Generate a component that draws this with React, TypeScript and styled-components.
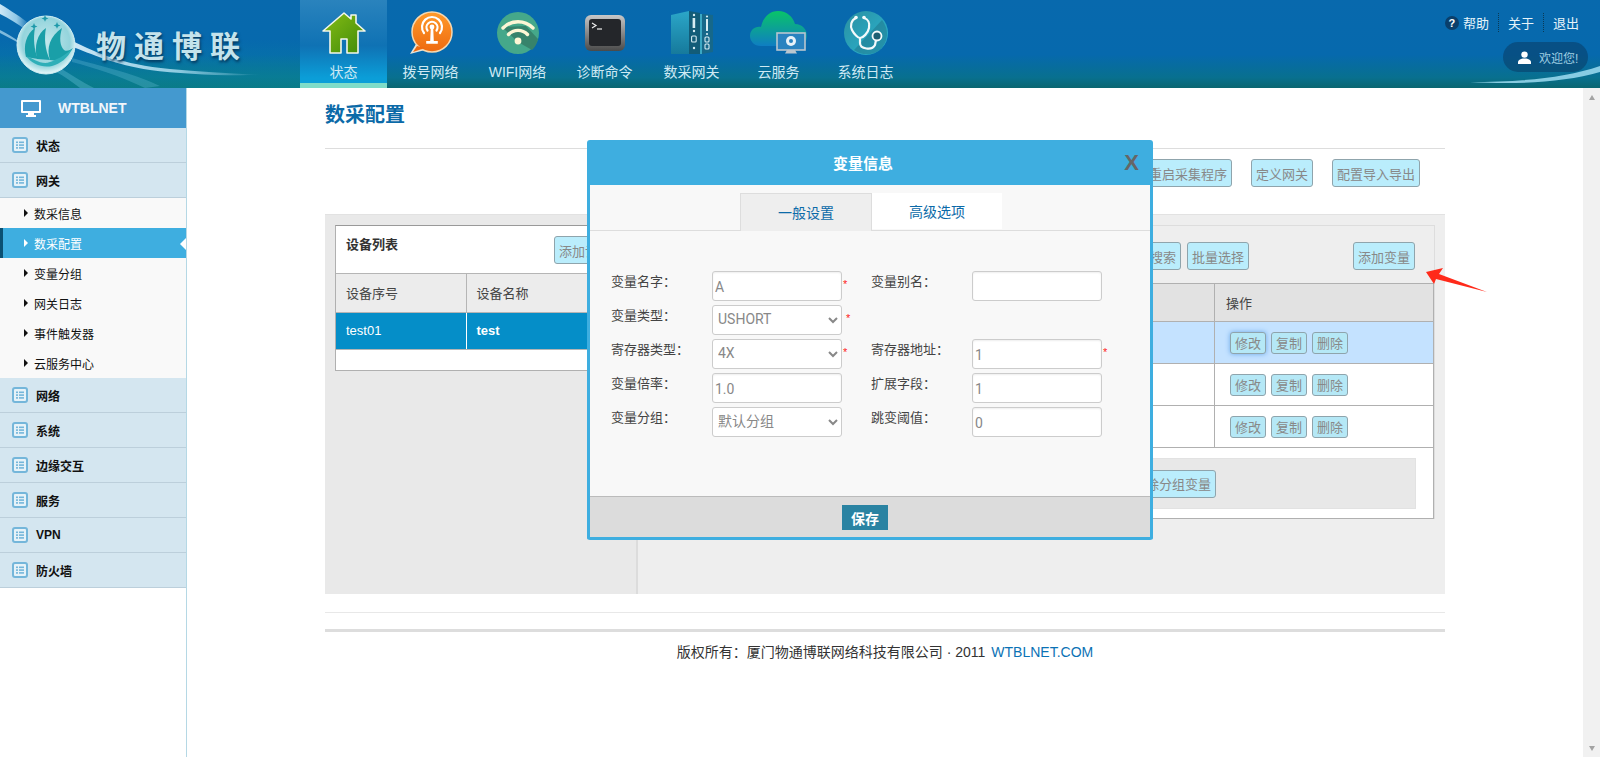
import React from "react";
import styled, { createGlobalStyle } from "styled-components";

const CJK = `"Liberation Sans", "Noto Sans CJK SC", sans-serif`;

const GlobalStyle = createGlobalStyle`
  html, body {
    margin: 0;
    padding: 0;
    height: 100%;
    overflow: hidden;
    background: #fff;
    font-family: ${CJK};
    font-size: 13px;
    color: #333;
  }
  * { box-sizing: border-box; }
`;

const Page = styled.div`
  position: relative;
  width: 1600px;
  height: 757px;
  display: flex;
  flex-direction: column;
  overflow: hidden;
`;

/* ---------- header ---------- */

const Header = styled.header`
  position: relative;
  flex: 0 0 88px;
  display: flex;
  background: linear-gradient(#0869ad 0%, #0669ad 62%, #08708f 88%, #0a6670 100%);
`;

const Banner = styled.div`
  position: relative;
  flex: 0 0 300px;
  display: flex;
  align-items: center;
  padding-left: 96px;
  overflow: hidden;
`;

const BannerArt = styled.svg`
  position: absolute;
  left: 0;
  top: 0;
`;

const BrandName = styled.span`
  position: relative;
  font-family: "Noto Sans CJK SC", sans-serif;
  font-size: 30px;
  font-weight: 700;
  letter-spacing: 8px;
  line-height: 34px;
  color: #c4e3ec;
  text-shadow: 1px 2px 3px #04375c;
  white-space: nowrap;
`;

const Nav = styled.nav`
  display: flex;
`;

const NavItem = styled.a<{ $active?: boolean }>`
  width: 87px;
  height: 88px;
  display: flex;
  flex-direction: column;
  align-items: center;
  padding-top: 10px;
  color: #cfeaf4;
  font-size: 14px;
  background: ${(p) =>
    p.$active ? "linear-gradient(#2a83bd, #0f72b4 55%, #0b9ed8 94%)" : "none"};
  border-bottom: 5px solid ${(p) => (p.$active ? "#7fdcc8" : "transparent")};
`;

const NavLabel = styled.span`
  margin-top: 6px;
  line-height: 20px;
  white-space: nowrap;
`;

const HeaderRight = styled.div`
  position: relative;
  margin-left: auto;
  display: flex;
  flex-direction: column;
  align-items: flex-end;
  padding: 14px 12px 0 0;
  width: 280px;
  overflow: hidden;
`;

const TopLinks = styled.div`
  position: relative;
  display: flex;
  align-items: center;
  height: 17px;
  color: #e6f4fa;
  font-size: 13px;
  padding-right: 9px;
`;

const HelpDot = styled.span`
  width: 14px;
  height: 14px;
  border-radius: 50%;
  background: #0a3f6b;
  color: #fff;
  font-size: 11px;
  font-weight: 700;
  line-height: 14px;
  text-align: center;
  margin-right: 4px;
`;

const TopLink = styled.a<{ $sep?: boolean }>`
  padding-left: ${(p) => (p.$sep ? "9px" : "0")};
  margin-left: ${(p) => (p.$sep ? "9px" : "0")};
  border-left: ${(p) => (p.$sep ? "1px dotted #0a3a55" : "none")};
`;

const Welcome = styled.div`
  position: relative;
  margin-top: 11px;
  width: 85px;
  height: 30px;
  border-radius: 15px;
  background: rgba(10, 60, 100, 0.55);
  display: flex;
  align-items: center;
  gap: 8px;
  padding-left: 15px;
  color: #9fcfe2;
  font-size: 12px;
`;

const Flare = styled.svg`
  position: absolute;
  right: 0;
  bottom: 0;
`;

/* ---------- body ---------- */

const Body = styled.div`
  flex: 1;
  display: flex;
  min-height: 0;
`;

const Sidebar = styled.aside`
  flex: 0 0 187px;
  border-right: 1px solid #b5d8e5;
`;

const SideTitle = styled.div`
  height: 40px;
  display: flex;
  align-items: center;
  gap: 17px;
  padding-left: 21px;
  background: #4499cf;
  color: #f2f6fb;
  font-size: 14px;
  font-weight: 700;
`;

const MenuRow = styled.div`
  height: 35px;
  display: flex;
  align-items: center;
  gap: 8px;
  padding-left: 12px;
  background: #d4e6f0;
  border-bottom: 1px solid #bccfdb;
  color: #111;
  font-size: 12px;
  font-weight: 700;
`;

const SubList = styled.div`
  background: #f9f9f9;
`;

const SubRow = styled.div<{ $active?: boolean }>`
  position: relative;
  height: 30px;
  display: flex;
  align-items: center;
  gap: 6px;
  padding-left: ${(p) => (p.$active ? "21px" : "24px")};
  color: ${(p) => (p.$active ? "#fff" : "#111")};
  font-size: 12px;
  background: ${(p) => (p.$active ? "#3eaee0" : "none")};
  border-left: ${(p) => (p.$active ? "3px solid #0a5072" : "none")};
`;

const Caret = styled.i<{ $active?: boolean }>`
  width: 0;
  height: 0;
  border-style: solid;
  border-width: 4px 0 4px 4px;
  border-color: transparent transparent transparent
    ${(p) => (p.$active ? "#fff" : "#111")};
`;

const Notch = styled.i`
  position: absolute;
  right: 0;
  top: 10px;
  width: 0;
  height: 0;
  border-style: solid;
  border-width: 6px 6px 6px 0;
  border-color: transparent #fff transparent transparent;
`;

const Main = styled.main`
  flex: 1;
  padding: 0 138px;
`;

const PageTitle = styled.h2`
  margin: 0;
  height: 61px;
  padding-top: 12px;
  border-bottom: 1px solid #ddd;
  color: #0b6aa8;
  font-size: 20px;
  font-weight: 700;
  line-height: 30px;
`;

const Toolbar = styled.div`
  display: flex;
  justify-content: flex-end;
  gap: 19px;
  height: 65px;
  padding: 10px 25px 0 0;
`;

const ActionButton = styled.button`
  height: 28px;
  padding: 0 4px;
  border: 1px solid #8fa4ac;
  border-radius: 3px;
  background: #baedfc;
  color: #888;
  font-family: ${CJK};
  font-size: 13px;
  white-space: nowrap;
`;

const Panels = styled.section`
  height: 380px;
  display: flex;
  border-top: 1px solid #e2e2e2;
`;

const LeftPanel = styled.div`
  flex: 0 0 313px;
  padding: 10px;
  background: #e9e9e9;
  border-right: 2px solid #dcdcdc;
`;

const RightPanel = styled.div`
  flex: 1;
  padding: 10px 10px 0;
  background: #eee;
`;

const DeviceBox = styled.div`
  background: #fff;
  border: 1px solid #b0b0b0;
  border-top-color: #999;
`;

const DeviceHead = styled.div`
  height: 48px;
  display: flex;
  justify-content: space-between;
  padding: 10px 9px 0 10px;
  border-bottom: 1px solid #b5b5b5;
  font-weight: 700;
  font-size: 13px;
  line-height: 18px;
  color: #333;
`;

const DataTable = styled.table`
  width: 100%;
  border-collapse: collapse;
  table-layout: fixed;
`;

const HeadCell = styled.th<{ $w?: number }>`
  height: 38px;
  padding: 0 10px;
  width: ${(p) => (p.$w ? `${p.$w}px` : "auto")};
  background: #ececec;
  border-right: 1px solid #b5b5b5;
  border-bottom: 1px solid #b5b5b5;
  font-weight: 400;
  font-size: 13px;
  text-align: left;
  color: #444;
`;

const DeviceCell = styled.td<{ $bold?: boolean }>`
  height: 37px;
  padding: 0 10px;
  background: #058ec8;
  border-right: 1px solid #fff;
  border-bottom: 1px solid #b5b5b5;
  color: #fff;
  font-size: 13px;
  font-weight: ${(p) => (p.$bold ? 700 : 400)};
`;

const DeviceSpacer = styled.div`
  height: 20px;
`;

const VarBox = styled.div`
  border-top: 1px solid #ddd;
  border-right: 1px solid #ddd;
`;

const VarTools = styled.div`
  height: 57px;
  display: flex;
  gap: 6px;
  padding: 16px 19px 0 0;
  justify-content: flex-end;
`;

const AddVarSlot = styled.div`
  margin-left: 98px;
`;

const VarTable = styled.div`
  background: #fff;
  border: 1px solid #b0b0b0;
`;

const VarGrid = styled.div`
  display: grid;
  grid-template-columns: 1fr 219px;
`;

const VarHeadCell = styled.div<{ $first?: boolean }>`
  height: 38px;
  display: flex;
  align-items: center;
  padding-left: 11px;
  background: #e2e2e2;
  border-left: ${(p) => (p.$first ? "none" : "1px solid #b0b0b0")};
  border-bottom: 1px solid #b0b0b0;
  font-size: 13px;
  color: #444;
`;

const VarCell = styled.div<{ $first?: boolean; $selected?: boolean }>`
  height: 42px;
  display: flex;
  align-items: center;
  gap: 5px;
  padding-left: 15px;
  background: ${(p) => (p.$selected ? "#c4e2ff" : "#fff")};
  border-left: ${(p) => (p.$first ? "none" : "1px solid #b0b0b0")};
  border-bottom: 1px solid #b0b0b0;
`;

const RowButton = styled.button<{ $glow?: boolean }>`
  width: 36px;
  height: 22px;
  padding: 0;
  border: 1px solid #8fa4ac;
  border-radius: 3px;
  background: #b5e8f6;
  color: #888;
  font-family: ${CJK};
  font-size: 13px;
  box-shadow: ${(p) => (p.$glow ? "0 0 5px #6aa8e8" : "none")};
`;

const GroupFooter = styled.div`
  padding: 10px 17px 9px 10px;
`;

const GroupBar = styled.div`
  height: 51px;
  display: flex;
  justify-content: flex-end;
  align-items: center;
  padding-right: 199px;
  background: #e8e8e8;
  border: 1px solid #e2e2e2;
`;

const FooterRule = styled.div`
  margin-top: 18px;
  height: 1px;
  background: #e8e8e8;
`;

const CopyRight = styled.footer`
  margin-top: 16px;
  border-top: 3px solid #ddd;
  padding-top: 10px;
  text-align: center;
  font-size: 14px;
  line-height: 20px;
  color: #333;
`;

const CopyLink = styled.a`
  margin-left: 6px;
  color: #0b72b5;
`;

const ScrollTrack = styled.div`
  flex: 0 0 17px;
  display: flex;
  flex-direction: column;
  justify-content: space-between;
  align-items: center;
  padding: 7px 0 6px;
  background: #f1f1f1;
`;

const ScrollArrow = styled.i<{ $down?: boolean }>`
  width: 0;
  height: 0;
  border-style: solid;
  border-width: ${(p) => (p.$down ? "5px 3.5px 0" : "0 3.5px 5px")};
  border-color: ${(p) =>
    p.$down
      ? "#a3a3a3 transparent transparent"
      : "transparent transparent #a3a3a3"};
`;

/* ---------- modal ---------- */

const Modal = styled.div`
  position: absolute;
  left: 587px;
  top: 140px;
  width: 566px;
  height: 400px;
  display: flex;
  flex-direction: column;
  background: #f8f8f8;
  border: 3px solid #3eaee0;
  border-top: none;
  border-radius: 3px;
`;

const ModalHead = styled.div`
  position: relative;
  flex: 0 0 45px;
  display: flex;
  justify-content: center;
  align-items: center;
  padding-right: 14px;
  background: #3eaee0;
  color: #fff;
  font-size: 15px;
  font-weight: 700;
`;

const CloseMark = styled.span`
  position: absolute;
  right: 11px;
  top: 12px;
  font-size: 22px;
  line-height: 22px;
  font-weight: 700;
  color: #666;
`;

const TabBar = styled.div`
  display: flex;
  height: 46px;
  padding: 8px 0 0 150px;
  border-bottom: 1px solid #ddd;
`;

const Tab = styled.div<{ $current?: boolean }>`
  width: ${(p) => (p.$current ? "132px" : "130px")};
  height: ${(p) => (p.$current ? "38px" : "36px")};
  display: flex;
  justify-content: center;
  align-items: center;
  padding-bottom: 1px;
  color: #0b6aa8;
  font-size: 14px;
  background: ${(p) => (p.$current ? "#eee" : "#fff")};
  border: ${(p) => (p.$current ? "1px solid #ddd" : "none")};
  border-bottom: none;
`;

const FormGrid = styled.div`
  flex: 1;
  display: grid;
  grid-template-columns: 100px 130px 30px 100px 130px 1fr;
  grid-auto-rows: 30px;
  row-gap: 4px;
  padding: 40px 0 0 22px;
`;

const FieldLabel = styled.label`
  padding-top: 2px;
  margin-left: -1px;
  font-size: 13px;
  line-height: 18px;
  color: #444;
`;

const TextField = styled.input`
  width: 130px;
  height: 30px;
  padding: 1px 2px 0;
  border: 1px solid #ccc;
  border-radius: 3px;
  background: #fff;
  box-shadow: inset 0 1px 2px #eee;
  color: #888;
  font-family: Roboto, "Noto Sans CJK SC", sans-serif;
  font-size: 14px;
`;

const SelectField = styled.select`
  width: 130px;
  height: 30px;
  padding: 0 1px 2px;
  border: 1px solid #ccc;
  border-radius: 3px;
  background: #fff;
  color: #888;
  font-family: Roboto, "Noto Sans CJK SC", sans-serif;
  font-size: 14px;
`;

const Required = styled.span<{ $wide?: boolean }>`
  padding: 6px 0 0 ${(p) => (p.$wide ? "4px" : "1px")};
  color: #f22;
  font-size: 11px;
  line-height: 14px;
`;

const ModalFoot = styled.div`
  flex: 0 0 41px;
  display: flex;
  justify-content: center;
  align-items: flex-start;
  padding: 8px 10px 0 0;
  background: #dcdcdc;
  border-top: 1px solid #bbb;
`;

const SaveButton = styled.button`
  width: 46px;
  height: 25px;
  padding: 0;
  border: none;
  background: #2a83a2;
  color: #fff;
  font-family: ${CJK};
  font-size: 14px;
  font-weight: 700;
`;

const PointerArrow = styled.svg`
  position: absolute;
  left: 1420px;
  top: 262px;
`;

/* ---------- drawings ---------- */

const LogoArt = () => (
  <BannerArt width="300" height="88" viewBox="0 0 300 88">
    <defs>
      <radialGradient id="ball" cx="50%" cy="45%" r="55%">
        <stop offset="0" stopColor="#c2e8ec" />
        <stop offset="0.75" stopColor="#94d4dc" />
        <stop offset="1" stopColor="#e8f8fa" />
      </radialGradient>
      <linearGradient id="sweep" x1="0" y1="0" x2="1" y2="0">
        <stop offset="0" stopColor="#e4f6fe" stopOpacity="0.9" />
        <stop offset="0.55" stopColor="#bfe8fa" stopOpacity="0.75" />
        <stop offset="1" stopColor="#bfe8fa" stopOpacity="0" />
      </linearGradient>
      <linearGradient id="haze" x1="0" y1="0" x2="0" y2="1">
        <stop offset="0" stopColor="#0a8c9c" stopOpacity="0" />
        <stop offset="1" stopColor="#0a8c9c" stopOpacity="0.55" />
      </linearGradient>
    </defs>
    <rect y="40" width="300" height="48" fill="url(#haze)" />
    <path d="M0 4 C10 10 22 18 30 24 L26 30 C18 24 8 18 0 14Z" fill="url(#sweep)" />
    <path d="M0 30 C8 34 14 38 20 42 L20 44 C14 40 6 36 0 33Z" fill="#cfeefc" opacity="0.6" />
    <path d="M70 40 C100 54 120 64 170 69 C200 72 230 73 262 75 C220 76 180 74 150 70 C115 65 92 54 70 46Z" fill="url(#sweep)" />
    <path d="M72 58 C100 66 130 72 160 86 L145 88 C120 76 95 68 72 62Z" fill="#7fd0e8" opacity="0.25" />
    <path d="M60 68 C70 74 82 82 94 88 L80 88 C72 82 64 76 56 72Z" fill="#7fd0e8" opacity="0.3" />
    <circle cx="46" cy="45" r="29" fill="url(#ball)" stroke="#cfeef2" strokeWidth="1" />
    <path d="M26 57 C23 46 26 34 35 28 C33 38 34 50 38 59Z" fill="#1a9fa8" />
    <path d="M37 59 C34 46 37 34 46 28 C44 38 45 50 50 60Z" fill="#1a9fa8" />
    <path d="M50 60 C46 48 50 36 62 28 C59 38 60 46 64 50 C67 52 70 50 73 48 C68 56 60 62 50 60Z" fill="#1a9fa8" />
    <path d="M26 56 C33 58 42 66 50 62 C56 60 64 56 72 49 C68 58 60 64 52 66 C42 68 32 64 26 56Z" fill="#2fafb8" />
    <g fill="#1f9aaa">
      <path d="M34 23l1 2.4 2.4 1-2.4 1-1 2.4-1-2.4-2.4-1 2.4-1z" />
      <path d="M45 15l1 2.4 2.4 1-2.4 1-1 2.4-1-2.4-2.4-1 2.4-1z" />
      <path d="M57 22l1 2.4 2.4 1-2.4 1-1 2.4-1-2.4-2.4-1 2.4-1z" />
    </g>
  </BannerArt>
);

const HomeIcon = () => (
  <svg width="60" height="46" viewBox="0 0 60 46">
    <defs>
      <linearGradient id="homeFill" x1="0" y1="0" x2="1" y2="1">
        <stop offset="0" stopColor="#86bd14" />
        <stop offset="1" stopColor="#3f8a0a" />
      </linearGradient>
    </defs>
    <path
      d="M30 3 L37 9 V5 H42 V13 L51 21 H44 V43 H33 V29 H27 V43 H16 V21 H9 Z"
      fill="url(#homeFill)"
      stroke="#f3f6ea"
      strokeWidth="1.6"
      strokeLinejoin="round"
    />
  </svg>
);

const DialIcon = () => (
  <svg width="60" height="46" viewBox="0 0 60 46">
    <defs>
      <linearGradient id="dialFill" x1="0" y1="0" x2="0" y2="1">
        <stop offset="0" stopColor="#ff9a2a" />
        <stop offset="1" stopColor="#ee6a10" />
      </linearGradient>
    </defs>
    <path d="M15 34 L9 44 L24 40Z" fill="#e9e3d6" />
    <circle cx="31" cy="22" r="20" fill="url(#dialFill)" stroke="#f6d8b0" strokeWidth="1.5" />
    <path d="M16 36 L12 42 L24 38Z" fill="#ee6a10" />
    <g fill="none" stroke="#fff" strokeWidth="2.2" strokeLinecap="round">
      <path d="M23 23a10 10 0 1 1 16 0" />
      <path d="M26.5 20.5a5.5 5.5 0 1 1 9 0" />
    </g>
    <circle cx="31" cy="17" r="2.4" fill="#fff" />
    <path d="M29.8 18 h2.4 l.6 13 h4 v2.8 h-11.6 v-2.8 h4z" fill="#fff" />
  </svg>
);

const WifiIcon = () => (
  <svg width="60" height="46" viewBox="0 0 60 46">
    <circle cx="30" cy="23" r="21" fill="#45a88a" />
    <path d="M14 17 L30 32 L44 40 A21 21 0 0 0 50 29 L38 16Z" fill="#37836b" />
    <g fill="none" stroke="#fdf6d5" strokeWidth="3.4" strokeLinecap="round">
      <path d="M15 18a21 21 0 0 1 30 0" />
      <path d="M20.5 24.5a13 13 0 0 1 19 0" />
    </g>
    <circle cx="30" cy="31" r="3.4" fill="#fdf6d5" />
  </svg>
);

const TerminalIcon = () => (
  <svg width="60" height="46" viewBox="0 0 60 46">
    <defs>
      <linearGradient id="termRim" x1="0" y1="0" x2="0" y2="1">
        <stop offset="0" stopColor="#c8c8c8" />
        <stop offset="1" stopColor="#4a4a4a" />
      </linearGradient>
    </defs>
    <rect x="10" y="5" width="40" height="36" rx="6" fill="url(#termRim)" />
    <rect x="14" y="9" width="32" height="27" rx="3" fill="#24262a" />
    <path d="M17 13l4 2.5-4 2.5" fill="none" stroke="#eee" strokeWidth="1.2" />
    <path d="M22 19h5" stroke="#eee" strokeWidth="1.2" />
  </svg>
);

const GatewayIcon = () => (
  <svg width="60" height="46" viewBox="0 0 60 46">
    <defs>
      <linearGradient id="gwSide" x1="0" y1="0" x2="0" y2="1">
        <stop offset="0" stopColor="#2ba6c8" />
        <stop offset="1" stopColor="#167a9c" />
      </linearGradient>
    </defs>
    <path d="M9 5 L27 1 V44 H9Z" fill="url(#gwSide)" />
    <path d="M27 1 L38 3 V44 H27Z" fill="#125c78" />
    <path d="M38 4 H40 V44 H38Z" fill="#3aa8c4" />
    <path d="M40 4 L51 5 V42 L40 44Z" fill="#16688a" />
    <g fill="#d6ecf2">
      <circle cx="32" cy="5" r="1.2" />
      <rect x="30.6" y="8" width="2.6" height="10" />
      <circle cx="32" cy="21" r="1.2" />
      <circle cx="32" cy="38" r="1.2" />
      <circle cx="45" cy="6.5" r="1.1" />
      <rect x="44" y="9" width="2" height="12" />
      <circle cx="45" cy="24" r="1.1" />
    </g>
    <g fill="none" stroke="#d6ecf2" strokeWidth="1.1">
      <rect x="29.6" y="26" width="4.6" height="6" rx="1" />
      <rect x="43" y="27" width="4" height="5" rx="1" />
      <rect x="43" y="34" width="4" height="5" rx="1" />
    </g>
  </svg>
);

const CloudIcon = () => (
  <svg width="60" height="46" viewBox="0 0 60 46">
    <defs>
      <linearGradient id="cloudFill" x1="0" y1="0" x2="0" y2="1">
        <stop offset="0" stopColor="#09c468" />
        <stop offset="1" stopColor="#0f7ec2" />
      </linearGradient>
    </defs>
    <path
      d="M12 36 C5 36 1 31 1 26 C1 20 6 16 12 17 C14 7 21 1 29 1 C38 1 44 7 46 14 C53 14 58 19 58 26 C58 31 55 36 48 36Z"
      fill="url(#cloudFill)"
    />
    <rect x="28" y="23" width="28" height="17" fill="#2a83c0" stroke="#b9c6cf" strokeWidth="1.6" />
    <path d="M38 40h8l2 3.5H36z" fill="#b9c6cf" />
    <circle cx="42" cy="31" r="5" fill="#e8f2f8" />
    <circle cx="42" cy="31" r="2" fill="#2a83c0" />
  </svg>
);

const StethoIcon = () => (
  <svg width="60" height="46" viewBox="0 0 60 46">
    <defs>
      <linearGradient id="stethoFill" x1="0" y1="0" x2="1" y2="1">
        <stop offset="0" stopColor="#2a8fa0" />
        <stop offset="1" stopColor="#2ab6d4" />
      </linearGradient>
    </defs>
    <circle cx="30" cy="23" r="22" fill="url(#stethoFill)" />
    <path d="M18 40 L46 10 A22 22 0 0 1 44 40 A22 22 0 0 1 18 40Z" fill="#1d6c80" opacity="0.45" />
    <g fill="none" stroke="#f4fafb" strokeWidth="2.2" strokeLinecap="round">
      <path d="M20 8 C15 10 14 16 16 20 C18 24 22 28 24 28 C27 28 32 23 33 18 C34 13 32 9 28 8" />
      <path d="M24 28 V33 C24 39 36 41 39 35 L40 30" />
    </g>
    <circle cx="20" cy="7.5" r="1.8" fill="#f4fafb" />
    <circle cx="28" cy="7.5" r="1.8" fill="#f4fafb" />
    <circle cx="41" cy="26" r="4.5" fill="#1d5f72" stroke="#f4fafb" strokeWidth="1.8" />
  </svg>
);

const MonitorIcon = () => (
  <svg width="20" height="17" viewBox="0 0 20 17">
    <path d="M1 0h18a1 1 0 0 1 1 1v11a1 1 0 0 1-1 1H1a1 1 0 0 1-1-1V1a1 1 0 0 1 1-1zm1 2v9h16V2z" fill="#fff" fillRule="evenodd" />
    <path d="M7 13h6v2h2v2H5v-2h2z" fill="#fff" />
  </svg>
);

const ListIcon = () => (
  <svg width="16" height="16" viewBox="0 0 16 16">
    <rect x="1" y="1" width="14" height="14" rx="2" fill="#e6f2f8" stroke="#74b6da" strokeWidth="2" />
    <g fill="#74b6da">
      <rect x="4" y="4.5" width="2" height="1.6" />
      <rect x="7" y="4.5" width="5" height="1.6" />
      <rect x="4" y="7.3" width="2" height="1.6" />
      <rect x="7" y="7.3" width="5" height="1.6" />
      <rect x="4" y="10.1" width="2" height="1.6" />
      <rect x="7" y="10.1" width="5" height="1.6" />
    </g>
  </svg>
);

const UserIcon = () => (
  <svg width="13" height="13" viewBox="0 0 13 13">
    <circle cx="6.5" cy="3.6" r="3.2" fill="#fff" />
    <path d="M0 13v-2.2C0 9 2.5 8 4.6 7.4h3.8C10.5 8 13 9 13 10.8V13z" fill="#fff" />
  </svg>
);

const navItems = [
  { label: "状态", icon: <HomeIcon />, active: true },
  { label: "拨号网络", icon: <DialIcon /> },
  { label: "WIFI网络", icon: <WifiIcon /> },
  { label: "诊断命令", icon: <TerminalIcon /> },
  { label: "数采网关", icon: <GatewayIcon /> },
  { label: "云服务", icon: <CloudIcon /> },
  { label: "系统日志", icon: <StethoIcon /> },
];

const subItems = ["数采信息", "数采配置", "变量分组", "网关日志", "事件触发器", "云服务中心"];
const lowerMenu = ["网络", "系统", "边缘交互", "服务", "VPN", "防火墙"];

const App: React.FC = () => {
  return (
    <Page>
      <GlobalStyle />
      <Header>
        <Banner>
          <LogoArt />
          <BrandName>物通博联</BrandName>
        </Banner>
        <Nav>
          {navItems.map((item) => (
            <NavItem key={item.label} $active={item.active}>
              {item.icon}
              <NavLabel>{item.label}</NavLabel>
            </NavItem>
          ))}
        </Nav>
        <HeaderRight>
          <Flare width="130" height="30" viewBox="0 0 130 30">
            <path d="M0 24 C50 24 95 20 130 8 V14 C95 24 50 27 0 24Z" fill="#a8e4f8" opacity="0.8" />
          </Flare>
          <TopLinks>
            <HelpDot>?</HelpDot>
            <TopLink>帮助</TopLink>
            <TopLink $sep>关于</TopLink>
            <TopLink $sep>退出</TopLink>
          </TopLinks>
          <Welcome>
            <UserIcon />
            欢迎您!
          </Welcome>
        </HeaderRight>
      </Header>

      <Body>
        <Sidebar>
          <SideTitle>
            <MonitorIcon />
            WTBLNET
          </SideTitle>
          <MenuRow>
            <ListIcon />
            状态
          </MenuRow>
          <MenuRow>
            <ListIcon />
            网关
          </MenuRow>
          <SubList>
            {subItems.map((name) => {
              const active = name === "数采配置";
              return (
                <SubRow key={name} $active={active}>
                  <Caret $active={active} />
                  {name}
                  {active && <Notch />}
                </SubRow>
              );
            })}
          </SubList>
          {lowerMenu.map((name) => (
            <MenuRow key={name}>
              <ListIcon />
              {name}
            </MenuRow>
          ))}
        </Sidebar>

        <Main>
          <PageTitle>数采配置</PageTitle>
          <Toolbar>
            <ActionButton>重启采集程序</ActionButton>
            <ActionButton>定义网关</ActionButton>
            <ActionButton>配置导入导出</ActionButton>
          </Toolbar>
          <Panels>
            <LeftPanel>
              <DeviceBox>
                <DeviceHead>
                  设备列表
                  <ActionButton>添加设备</ActionButton>
                </DeviceHead>
                <DataTable>
                  <thead>
                    <tr>
                      <HeadCell $w={130}>设备序号</HeadCell>
                      <HeadCell>设备名称</HeadCell>
                    </tr>
                  </thead>
                  <tbody>
                    <tr>
                      <DeviceCell>test01</DeviceCell>
                      <DeviceCell $bold>test</DeviceCell>
                    </tr>
                  </tbody>
                </DataTable>
                <DeviceSpacer />
              </DeviceBox>
            </LeftPanel>
            <RightPanel>
              <VarBox>
                <VarTools>
                  <ActionButton>搜索</ActionButton>
                  <ActionButton>批量选择</ActionButton>
                  <AddVarSlot>
                    <ActionButton>添加变量</ActionButton>
                  </AddVarSlot>
                </VarTools>
                <VarTable>
                  <VarGrid>
                    <VarHeadCell $first>变量名字</VarHeadCell>
                    <VarHeadCell>操作</VarHeadCell>
                    {[0, 1, 2].map((row) => (
                      <React.Fragment key={row}>
                        <VarCell $first $selected={row === 0} />
                        <VarCell $selected={row === 0}>
                          <RowButton $glow={row === 0}>修改</RowButton>
                          <RowButton>复制</RowButton>
                          <RowButton>删除</RowButton>
                        </VarCell>
                      </React.Fragment>
                    ))}
                  </VarGrid>
                  <GroupFooter>
                    <GroupBar>
                      <ActionButton>删除分组变量</ActionButton>
                    </GroupBar>
                  </GroupFooter>
                </VarTable>
              </VarBox>
            </RightPanel>
          </Panels>
          <FooterRule />
          <CopyRight>
            版权所有：厦门物通博联网络科技有限公司 · 2011
            <CopyLink>WTBLNET.COM</CopyLink>
          </CopyRight>
        </Main>

        <ScrollTrack>
          <ScrollArrow />
          <ScrollArrow $down />
        </ScrollTrack>
      </Body>

      <Modal>
        <ModalHead>
          变量信息
          <CloseMark>X</CloseMark>
        </ModalHead>
        <TabBar>
          <Tab $current>一般设置</Tab>
          <Tab>高级选项</Tab>
        </TabBar>
        <FormGrid>
          <FieldLabel>变量名字：</FieldLabel>
          <TextField defaultValue="A" />
          <Required>*</Required>
          <FieldLabel>变量别名：</FieldLabel>
          <TextField />
          <span />

          <FieldLabel>变量类型：</FieldLabel>
          <SelectField defaultValue="USHORT">
            <option>USHORT</option>
          </SelectField>
          <Required $wide>*</Required>
          <span />
          <span />
          <span />

          <FieldLabel>寄存器类型：</FieldLabel>
          <SelectField defaultValue="4X">
            <option>4X</option>
          </SelectField>
          <Required>*</Required>
          <FieldLabel>寄存器地址：</FieldLabel>
          <TextField defaultValue="1" />
          <Required>*</Required>

          <FieldLabel>变量倍率：</FieldLabel>
          <TextField defaultValue="1.0" />
          <span />
          <FieldLabel>扩展字段：</FieldLabel>
          <TextField defaultValue="1" />
          <span />

          <FieldLabel>变量分组：</FieldLabel>
          <SelectField defaultValue="默认分组">
            <option>默认分组</option>
          </SelectField>
          <span />
          <FieldLabel>跳变阈值：</FieldLabel>
          <TextField defaultValue="0" />
        </FormGrid>
        <ModalFoot>
          <SaveButton>保存</SaveButton>
        </ModalFoot>
      </Modal>

      <PointerArrow width="70" height="34" viewBox="0 0 70 34">
        <path d="M6 10 L23 6 L19 12 L67 30 L16 17 L14 22Z" fill="#ff2a1a" />
      </PointerArrow>
    </Page>
  );
};

export default App;
